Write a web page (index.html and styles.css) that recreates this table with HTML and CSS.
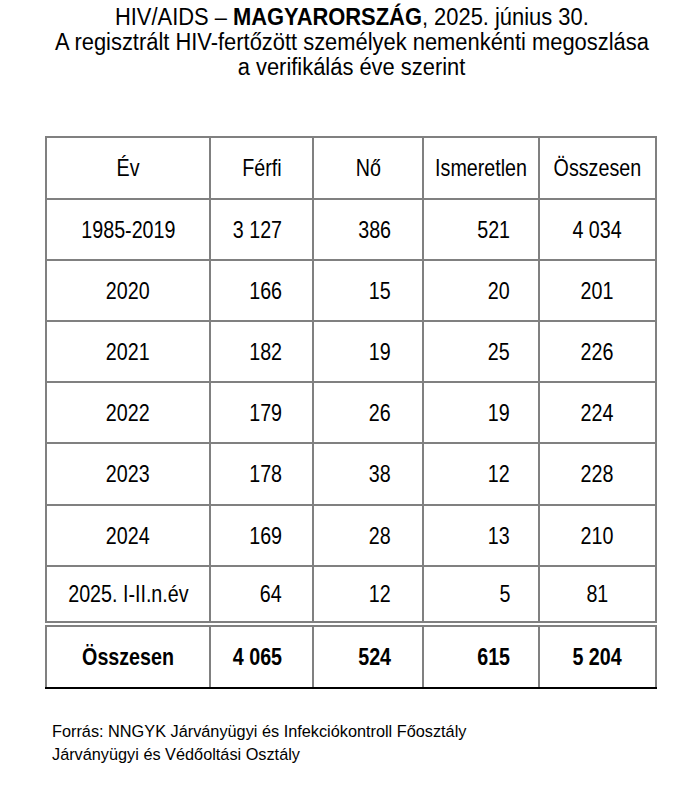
FILE: index.html
```html
<!DOCTYPE html>
<html lang="hu">
<head>
<meta charset="utf-8">
<title>HIV/AIDS – Magyarország</title>
<link rel="stylesheet" href="styles.css">
</head>
<body>
<div class="page">
  <header class="title">
    <div class="line"><span class="tn">HIV/AIDS – <b>MAGYARORSZÁG</b>, 2025. június 30.</span></div>
    <div class="line"><span class="tn">A regisztrált HIV-fertőzött személyek nemenkénti megoszlása</span></div>
    <div class="line"><span class="tn">a verifikálás éve szerint</span></div>
  </header>
  <table class="stats">
    <colgroup>
      <col class="c-year"><col class="c-m"><col class="c-f"><col class="c-u"><col class="c-t">
    </colgroup>
    <thead>
      <tr class="r-head">
        <th><span class="nt">Év</span></th><th><span class="nt">Férfi</span></th><th><span class="nt">Nő</span></th><th><span class="nt">Ismeretlen</span></th><th><span class="nt">Összesen</span></th>
      </tr>
    </thead>
    <tbody>
      <tr class="r61"><td class="year"><span class="nt">1985-2019</span></td><td class="m"><span class="nt">3 127</span></td><td class="f"><span class="nt">386</span></td><td class="u"><span class="nt">521</span></td><td class="t"><span class="nt">4 034</span></td></tr>
      <tr class="r61"><td class="year"><span class="nt">2020</span></td><td class="m"><span class="nt">166</span></td><td class="f"><span class="nt">15</span></td><td class="u"><span class="nt">20</span></td><td class="t"><span class="nt">201</span></td></tr>
      <tr class="r61"><td class="year"><span class="nt">2021</span></td><td class="m"><span class="nt">182</span></td><td class="f"><span class="nt">19</span></td><td class="u"><span class="nt">25</span></td><td class="t"><span class="nt">226</span></td></tr>
      <tr class="r61"><td class="year"><span class="nt">2022</span></td><td class="m"><span class="nt">179</span></td><td class="f"><span class="nt">26</span></td><td class="u"><span class="nt">19</span></td><td class="t"><span class="nt">224</span></td></tr>
      <tr class="r62"><td class="year"><span class="nt">2023</span></td><td class="m"><span class="nt">178</span></td><td class="f"><span class="nt">38</span></td><td class="u"><span class="nt">12</span></td><td class="t"><span class="nt">228</span></td></tr>
      <tr class="r61"><td class="year"><span class="nt">2024</span></td><td class="m"><span class="nt">169</span></td><td class="f"><span class="nt">28</span></td><td class="u"><span class="nt">13</span></td><td class="t"><span class="nt">210</span></td></tr>
      <tr class="r58"><td class="year"><span class="nt">2025. I-II.n.év</span></td><td class="m"><span class="nt">64</span></td><td class="f"><span class="nt">12</span></td><td class="u"><span class="nt">5</span></td><td class="t"><span class="nt">81</span></td></tr>
    </tbody>
    <tfoot>
      <tr class="r-total"><td class="year"><span class="nt">Összesen</span></td><td class="m"><span class="nt">4 065</span></td><td class="f"><span class="nt">524</span></td><td class="u"><span class="nt">615</span></td><td class="t"><span class="nt">5 204</span></td></tr>
    </tfoot>
  </table>
  <footer class="source">
    <div>Forrás: NNGYK Járványügyi és Infekciókontroll Főosztály</div>
    <div>Járványügyi és Védőoltási Osztály</div>
  </footer>
</div>
</body>
</html>
```
FILE: styles.css
```css
html, body {
  margin: 0;
  padding: 0;
  background: #ffffff;
}

.page {
  width: 700px;
  padding: 5px 0 0 0;
  color: #000;
  font-family: "Liberation Sans", Arial, sans-serif;
}

.title {
  text-align: center;
  font-size: 23px;
  line-height: 25px;
  padding-left: 4px;
}

.title .tn {
  display: inline-block;
  transform: scaleX(0.952);
  transform-origin: center;
  white-space: nowrap;
}

.title b {
  font-weight: bold;
}

.stats {
  margin: 56px 0 0 45px;
  border-collapse: collapse;
  table-layout: fixed;
  width: 612px;
  font-size: 24px;
}

.c-year { width: 164px; }
.c-m { width: 103px; }
.c-f { width: 110px; }
.c-u { width: 116px; }
.c-t { width: 117px; }

.stats th,
.stats td {
  border: 2px solid #808080;
  padding: 0;
  vertical-align: middle;
  font-weight: normal;
  text-align: center;
  white-space: nowrap;
}

.nt {
  display: inline-block;
  transform: scaleX(0.82);
  transform-origin: center;
}

.r-head { height: 62px; }
.r62 { height: 62px; }
.r61 { height: 61px; }
.r58 { height: 58px; }

.stats td.m { text-align: right; padding-right: 30px; }
.stats td.f { text-align: right; padding-right: 31px; }
.stats td.u { text-align: right; padding-right: 28px; }
.stats td.t { text-align: center; }

.stats td.m .nt,
.stats td.f .nt,
.stats td.u .nt {
  transform-origin: right center;
}

.r-total { height: 64px; }
.r-total td {
  font-weight: bold;
  border-top: 6px double #808080;
  border-bottom: 2px solid #000;
}

.source {
  margin: 31px 0 0 52px;
  font-size: 16.3px;
  line-height: 23px;
}
```
